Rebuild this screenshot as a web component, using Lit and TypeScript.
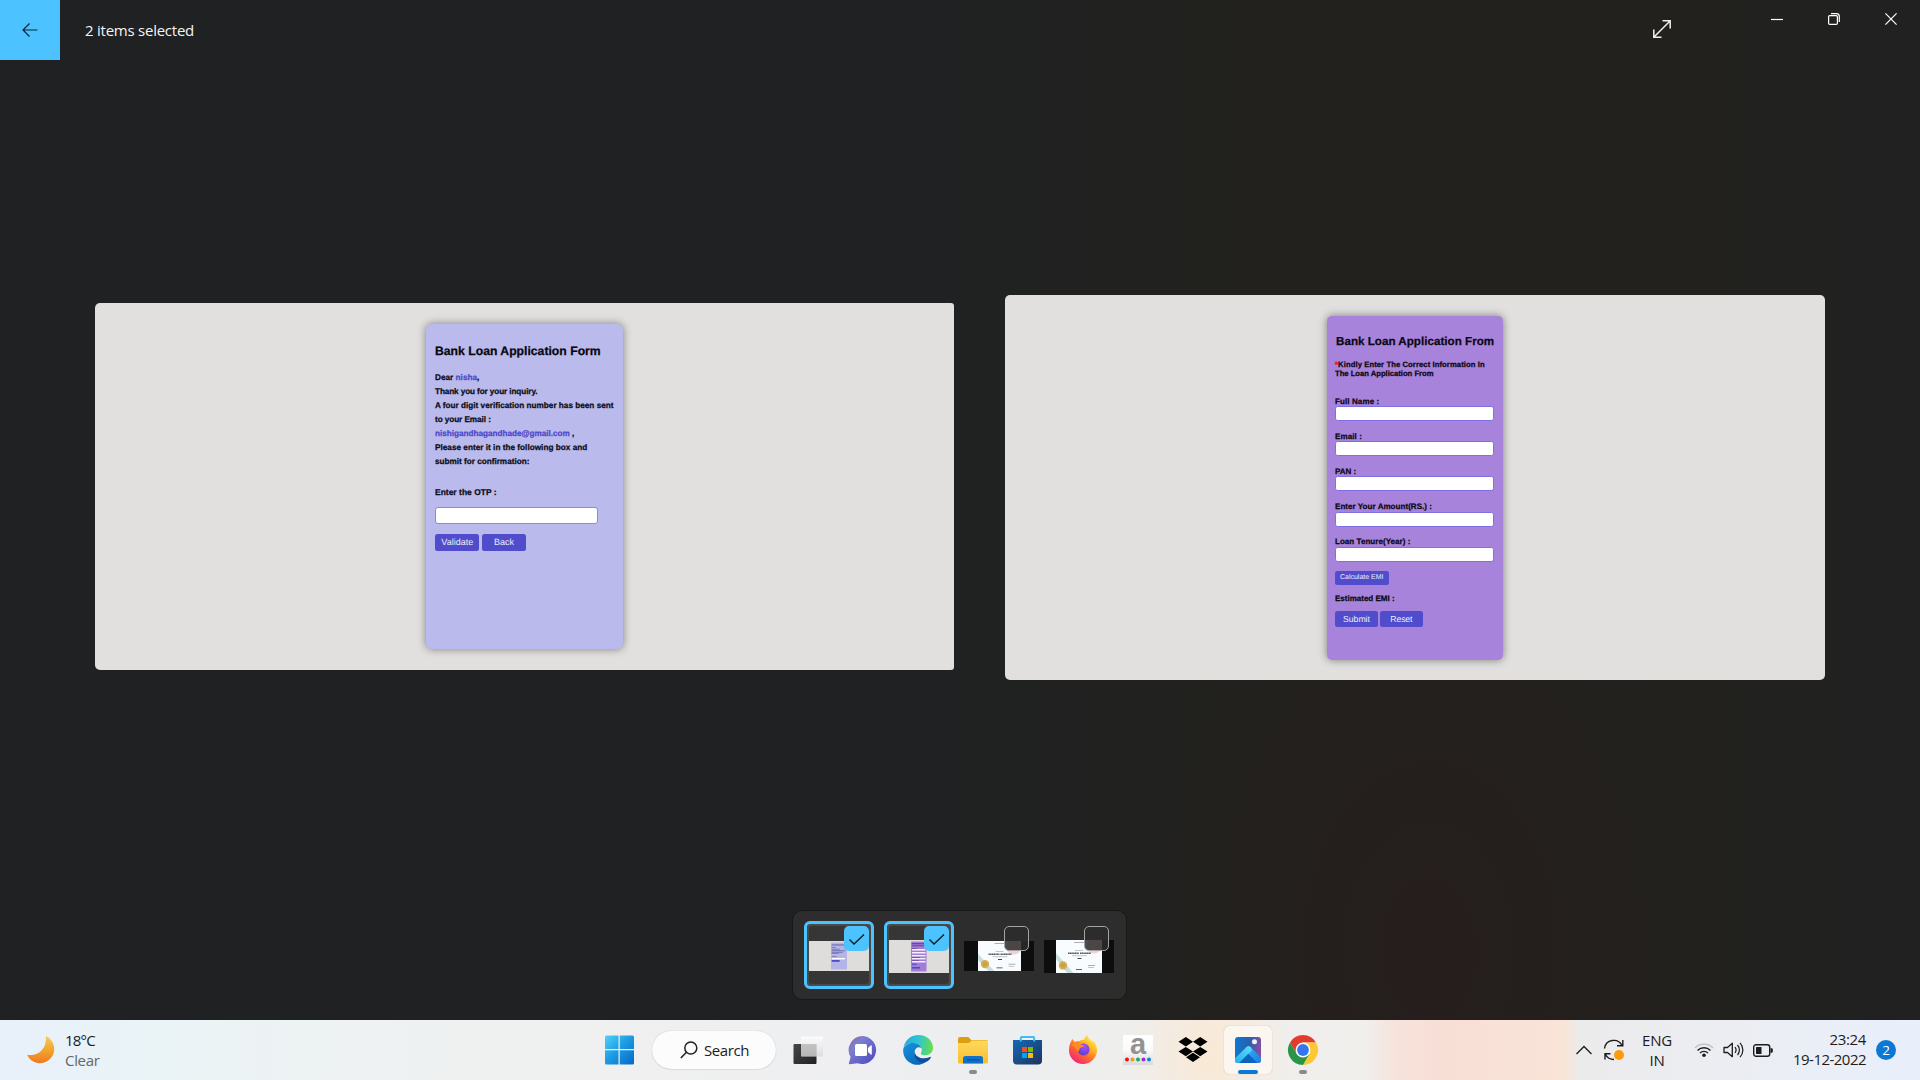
import { LitElement, html, css, svg } from "lit";
import { customElement } from "lit/decorators.js";

const FIELDS: [string, string][] = [
  ["Full Name :", "wide"],
  ["Email :", "wide"],
  ["PAN :", ""],
  ["Enter Your Amount(RS.) :", "mid"],
  ["Loan Tenure(Year) :", "mid"],
];

@customElement("otp-card")
export class OtpCard extends LitElement {
  static styles = css`
    :host { display: block; width: 196.3px; height: 325px; box-sizing: border-box; padding: 19.4px 0 0 8.7px;
      background: #babaec; border-radius: 6px; box-shadow: 0 0 8px rgba(0, 0, 0, 0.45);
      font: bold 8.2px/14px "Liberation Sans", Arial, sans-serif; color: #0c0c16; white-space: nowrap;
      text-rendering: geometricPrecision; }
    .title { font-size: 12.2px; line-height: 16px; letter-spacing: 0.01px; margin-bottom: 11.4px; color: #08080e;
      -webkit-text-stroke: 0.25px currentColor; }
    .line { -webkit-text-stroke: 0.25px currentColor; }
    .hl { color: #4c48cb; }
    .a { letter-spacing: 0.02px; }
    .b { letter-spacing: -0.11px; }
    .c { letter-spacing: 0; }
    .d { letter-spacing: -0.07px; }
    .e { letter-spacing: -0.02px; }
    .f { letter-spacing: 0.02px; }
    .g { letter-spacing: -0.01px; }
    .otp { font-size: 8.4px; letter-spacing: 0.06px; margin-top: 16.6px; -webkit-text-stroke: 0.25px currentColor; }
    .input { width: 163px; height: 16.5px; box-sizing: border-box; margin: 8px 0 9.7px; background: #fff;
      border: 0.8px solid #8b86e8; border-radius: 3px; }
    .row { display: flex; gap: 2.4px; }
    .btn { width: 44.5px; height: 17.2px; border-radius: 2.5px; background: #504ccc; color: #eeeefb;
      font-weight: normal; font-size: 9px; line-height: 17.6px; text-align: center; }
  `;
  render() {
    return html`
      <div class="title">Bank Loan Application Form</div>
      <div class="line a">Dear <span class="hl">nisha</span>,</div>
      <div class="line b">Thank you for your inquiry.</div>
      <div class="line c">A four digit verification number has been sent</div>
      <div class="line d">to your Email :</div>
      <div class="line e"><span class="hl">nishigandhagandhade@gmail.com</span> ,</div>
      <div class="line f">Please enter it in the following box and</div>
      <div class="line g">submit for confirmation:</div>
      <div class="otp">Enter the OTP :</div>
      <div class="input"></div>
      <div class="row"><div class="btn">Validate</div><div class="btn">Back</div></div>
    `;
  }
}

@customElement("loan-card")
export class LoanCard extends LitElement {
  static styles = css`
    :host { display: block; width: 175.7px; height: 344.4px; box-sizing: border-box; padding: 18px 0 0 8px;
      background: #a783dc; border-radius: 5px; box-shadow: 0 0 8px rgba(0, 0, 0, 0.45);
      font: bold 8px/10px "Liberation Sans", Arial, sans-serif; color: #0c0814; white-space: nowrap;
      text-rendering: geometricPrecision; }
    .title { font-size: 11.6px; line-height: 16px; letter-spacing: 0.03px; margin: 0 0 10px 1px; -webkit-text-stroke: 0.25px currentColor; }
    .note { font-size: 7.7px; line-height: 9.4px; -webkit-text-stroke: 0.25px currentColor; }
    .n1 { letter-spacing: 0.07px; }
    .n2 { letter-spacing: -0.03px; margin-bottom: 18.2px; }
    .star { color: #ff1030; -webkit-text-stroke: 0.5px #ff1030; }
    .label { -webkit-text-stroke: 0.25px currentColor; }
    .wide { letter-spacing: 0.109px; }
    .mid { letter-spacing: 0.05px; }
    .input { width: 159px; height: 15px; box-sizing: border-box; margin: -0.4px 0 10.5px; background: #fff;
      border: 0.8px solid #7f6fe6; border-radius: 2.5px; }
    .calc { width: 53.5px; height: 13.7px; margin: -1px 0 8.7px; border-radius: 2.5px; background: #504ccc;
      color: #eeecff; font-weight: normal; font-size: 7px; line-height: 13.7px; text-align: center; }
    .row { display: flex; gap: 2px; margin-top: 7.4px; }
    .btn { width: 42.9px; height: 16.2px; border-radius: 2.5px; background: #504ccc; color: #eeeefb;
      font-weight: normal; font-size: 8.7px; line-height: 16.2px; text-align: center; }
    .tight { letter-spacing: -0.15px; }
  `;
  render() {
    return html`
      <div class="title">Bank Loan Application From</div>
      <div class="note n1"><span class="star">*</span>Kindly Enter The Correct Information In</div>
      <div class="note n2">The Loan Application From</div>
      ${FIELDS.map(([label, cls]) => html`<div class="label ${cls}">${label}</div><div class="input"></div>`)}
      <div class="calc">Calculate EMI</div>
      <div class="label">Estimated EMI :</div>
      <div class="row"><div class="btn">Submit</div><div class="btn tight">Reset</div></div>
    `;
  }
}

@customElement("film-strip")
export class FilmStrip extends LitElement {
  static styles = css`
    :host { display: flex; gap: 10px; box-sizing: border-box; width: 335px; height: 90px; padding: 10px 11px;
      background: #2d2d2d; border: 1px solid #181818; border-radius: 10px; }
    .thumb { position: relative; width: 70px; height: 68px; flex: none; box-sizing: border-box; display: flex;
      align-items: center; justify-content: center; }
    .sel { border: 3px solid #4cc2ff; border-radius: 6px; background: #4a4a4a; }
    .inner { width: 60px; height: 58px; background: #363636; border-radius: 3px; display: flex; align-items: center; }
    .pic { display: block; position: relative; top: 1px; }
    .box { position: absolute; right: 5px; top: 5px; width: 25px; height: 25px; box-sizing: border-box;
      border: 1px solid #a4a4a4; border-radius: 5px; background: rgba(45, 45, 45, 0.85); }
    .sel .box { right: 2px; top: 2px; border: 0; background: #4cc2ff; }
    .box svg { display: block; }
  `;
  check() {
    return html`<svg width="25" height="25"><path d="M5.5 13.5L10 18L20 8.5" fill="none" stroke="#0a1a24" stroke-width="1.3"/></svg>`;
  }
  cert(h: number, x: number, w: number) {
    const m = x + w / 2;
    return html`<svg class="pic" width="70" height="${h}" viewBox="0 0 70 ${h}">
      <rect width="70" height="${h}" fill="#0d0d0d"/>
      <svg x="${x}" width="${w}" height="${h}">
        <rect width="${w}" height="${h}" fill="#f8fcfe"/>
        <path d="M0 13L${w * 0.38} ${h}H${w * 0.24}L0 19Z" fill="#c9dde2"/>
        <circle cx="${w * 0.83}" cy="6" r="7.5" fill="#f6ccd8"/>
        <circle cx="7" cy="${h * 0.77}" r="4.2" fill="#d6ad51"/>
        <circle cx="7" cy="${h * 0.77}" r="2.2" fill="#caa045"/>
      </svg>
      <g fill="#8a8f92">
        <rect x="${m - 5}" y="2" width="11" height=".7"/>
        <rect x="${m - 4}" y="10.4" width="8" height=".5"/>
        <rect x="${m - 7}" y="15.6" width="15" height=".5"/>
        <rect x="${m - 1.5}" y="18" width="4" height="1" fill="#444"/>
        <rect x="${m + 9}" y="${h * 0.76}" width="7" height=".7"/>
        <rect x="${m + 9}" y="${h * 0.83}" width="6" height=".5"/>
        <rect x="${m - 3}" y="${h * 0.88}" width="6" height=".9" fill="#555"/>
      </g>
      <path d="M${m - 11} 13.2h11M${m + 1} 13.2h11" stroke="#55595c" stroke-width="1.6" stroke-dasharray="1.4 .3"/>
    </svg>`;
  }
  render() {
    return html`
      <div class="thumb sel"><div class="inner">
        <svg class="pic" width="60" height="30">
          <rect width="60" height="30" fill="#dfdcdc"/><rect x="22" y="1.5" width="16" height="27" rx=".7" fill="#b5b4e6"/>
          <g fill="#7775b4"><rect x="22.7" y="3.3" width="13" height="1.3"/><rect x="22.7" y="6" width="4" height=".9"/>
          <rect x="22.7" y="7.8" width="8" height=".9"/><rect x="22.7" y="9.2" width="13.5" height="1"/><rect x="22.7" y="10.8" width="11" height="1"/>
          <rect x="22.7" y="12.2" width="7" height=".8"/><rect x="22.7" y="15.2" width="5" height=".8"/></g>
          <rect x="22.7" y="17" width="13.2" height="1.4" fill="#fff"/><rect x="22.7" y="19" width="8" height="1.8" fill="#4f4bc8"/>
        </svg></div><div class="box">${this.check()}</div></div>
      <div class="thumb sel"><div class="inner">
        <svg class="pic" width="60" height="33">
          <rect width="60" height="33" fill="#dfdcdc"/><rect x="22" y="1.5" width="15.5" height="30" rx=".7" fill="#a27cd6"/>
          <g fill="#6b479e"><rect x="23" y="3" width="13" height="1.3"/><rect x="23" y="5.2" width="12" height="1.1"/>
          <rect x="23" y="8" width="5" height=".7"/><rect x="23" y="17" width="8" height=".7"/><rect x="23" y="20" width="7" height=".7"/></g>
          <g fill="#f4effb"><rect x="23" y="9" width="13.5" height="1.6"/><rect x="23" y="12" width="13.5" height="1.5"/>
          <rect x="23" y="15" width="13.5" height="1.4"/><rect x="23" y="18" width="13.5" height="1.4"/><rect x="23" y="21" width="13.5" height="1.5"/></g>
          <g fill="#4f4bc8"><rect x="23" y="23.6" width="4.5" height="1.2"/><rect x="23" y="27" width="8" height="1.6"/></g>
        </svg></div><div class="box">${this.check()}</div></div>
      <div class="thumb">${this.cert(30, 14, 43)}<div class="box"></div></div>
      <div class="thumb">${this.cert(33, 12, 46)}<div class="box"></div></div>
    `;
  }
}

const ICONS = {
  start: svg`<defs><linearGradient id="w" x1="0" y1="0" x2="29" y2="29" gradientUnits="userSpaceOnUse"><stop offset="0" stop-color="#52d3fb"/><stop offset=".45" stop-color="#1e9fe4"/><stop offset="1" stop-color="#0669c8"/></linearGradient></defs>
    <path d="M1.500 .5H13.500V14H0V2Q0 .5 1.500 .5ZM14.700 .5H27.500Q29 .5 29 2V14H14.700ZM0 15.200H13.500V29.500H1.500Q0 29.500 0 28ZM14.700 15.200H29V28Q29 29.500 27.500 29.500H14.700Z" fill="url(#w)"/>`,
  tasks: svg`<defs><linearGradient id="t" x1="0" y1="0" x2="1" y2="1"><stop offset="0" stop-color="#474747"/><stop offset="1" stop-color="#212121"/></linearGradient><linearGradient id="tt" x1="0" y1="0" x2="0" y2="1"><stop offset="0" stop-color="#fff"/><stop offset="1" stop-color="#d8d8d8"/></linearGradient></defs>
    <rect x=".5" y="9" width="23" height="20" rx="1" fill="url(#t)"/><rect x="8" y="1.5" width="22" height="20" rx="1" fill="url(#tt)" opacity=".78"/><path d="M8 9H23.500V21.500H8Z" fill="#bbb" opacity=".5"/>`,
  chat: svg`<defs><linearGradient id="c" x1="0" y1="0" x2="1" y2="1"><stop offset="0" stop-color="#8f6795"/><stop offset=".3" stop-color="#7b7fd0"/><stop offset="1" stop-color="#4a45bd"/></linearGradient></defs>
    <path d="M15 1A14 14 0 1 1 9.5 28.2L1.6 29.3Q.6 29.3.9 28.2L2.6 22A14 14 0 0 1 15 1Z" fill="url(#c)"/><rect x="7" y="9" width="12" height="12" rx="1.6" fill="#fff"/><path d="M20 13L23 10.3Q23.8 10 23.8 11V19Q23.8 20 23 19.7L20 17Z" fill="#fff"/>`,
  edge: svg`<defs><linearGradient id="e1" x1="0" y1=".3" x2="1" y2=".4"><stop offset="0" stop-color="#2aa5e8"/><stop offset=".5" stop-color="#2fc6cf"/><stop offset="1" stop-color="#68de4b"/></linearGradient><linearGradient id="e2" x1="0" y1="0" x2=".6" y2="1"><stop offset="0" stop-color="#1596dc"/><stop offset="1" stop-color="#0b66bd"/></linearGradient></defs>
    <path d="M.6 12.5C2 4.5 8.500 0 15.500 0C24 0 30 6 30 12.8C30 17.500 26.500 20.300 22.300 20.300C18.500 20.300 17.500 18.800 18 17.800C20 15 18.500 9.500 12.500 8.200C7.500 7.300 2.500 9 .6 12.500Z" fill="url(#e1)"/>
    <path d="M.3 13.500C2 9.500 6.500 7.600 11 8C15.500 8.500 18 11 18.300 13C14 10.500 11.200 14.500 11.600 18.500C12 24 17.500 27.500 22.500 27C19 30 13 31 8 28.300C2.500 25.500-.5 20 .3 13.500Z" fill="url(#e2)"/>
    <path d="M11.600 16.500C10 23.500 17.500 30.800 24.500 26.300Q27 24.500 28 22.500Q28 21.600 27 21.900C20.500 25 12.500 23 11.600 16.500Z" fill="#0d4f9c"/>`,
  folder: svg`<defs><linearGradient id="f" x1="0" y1="0" x2="0" y2="1"><stop offset="0" stop-color="#ffda5e"/><stop offset="1" stop-color="#f9bd2c"/></linearGradient></defs>
    <path d="M0 4Q0 2 2 2H9.500Q11 2 12 3.500L13 5H28.500Q30 5 30 6.500V12H0Z" fill="#dd9f10"/><path d="M0 8H10.500Q12 8 13 6L13.500 5.500H30V27Q30 28.500 28.500 28.500H1.500Q0 28.500 0 27Z" fill="url(#f)"/><path d="M5 28.500V23.500Q5 21 7.500 21H22.500Q25 21 25 23.500V28.500Z" fill="#0e73c8"/><rect x="8.500" y="24.300" width="13" height="1.200" rx=".6" fill="#0a4e96"/>`,
  store: svg`<defs><linearGradient id="s" x1="0" y1="0" x2="1" y2="1"><stop offset="0" stop-color="#1569b4"/><stop offset="1" stop-color="#1f3360"/></linearGradient></defs>
    <path d="M0 5H29V25.500Q29 29.500 25 29.500H4Q0 29.500 0 25.500Z" fill="url(#s)"/><path d="M7.800 6.500V3Q7.800 2 8.800 2H20.200Q21.200 2 21.200 3V6.500" fill="none" stroke="#3cbdf5" stroke-width="2"/>
    <path d="M9 12H14V17H9Z" fill="#f25022"/><path d="M15 12H20V17H15Z" fill="#7fba00"/><path d="M9 18H14V23H9Z" fill="#00a4ef"/><path d="M15 18H20V23H15Z" fill="#ffb900"/>`,
  firefox: svg`<defs><linearGradient id="x" x1=".85" y1=".1" x2=".2" y2=".95"><stop offset="0" stop-color="#fff04a"/><stop offset=".3" stop-color="#ffb423"/><stop offset=".6" stop-color="#ff6a2c"/><stop offset="1" stop-color="#f0217c"/></linearGradient><radialGradient id="xp" cx=".6" cy=".3" r=".8"><stop offset="0" stop-color="#a050f5"/><stop offset="1" stop-color="#5a3bc4"/></radialGradient></defs>
    <path d="M4.500 4L6.500 7Q9 5.500 11.500 6Q13.500 4.500 16 4.700Q17 1.500 19 0Q20 3.500 24 6.500L25.500 6Q29 10 29 15.500C29 23 22.500 29 15 29C7.500 29 1 23 1 15.500Q1 8.500 4.500 4Z" fill="url(#x)"/>
    <circle cx="15.500" cy="14.500" r="6" fill="url(#xp)"/><path d="M3.500 10Q7 6 11 7.500L12.500 9.500L16 10.200Q15.500 12.300 12.500 12.800Q10.500 14.500 11 16.500Q8.500 16.500 7.500 13Q6 11 3.500 10Z" fill="#ff8a22"/>`,
  amazon: svg`<defs><linearGradient id="az" x1="0" y1="0" x2="0" y2="1"><stop offset="0" stop-color="#fff"/><stop offset=".5" stop-color="#fafafa"/><stop offset="1" stop-color="#dadada"/></linearGradient></defs>
    <rect width="30" height="30" fill="url(#az)"/><text x="15" y="19" text-anchor="middle" font-family="Liberation Sans" font-weight="bold" font-size="29" fill="#929292">a</text>
    <circle cx="4" cy="24.500" r="2" fill="#ee1111"/><circle cx="9.500" cy="24.500" r="2" fill="#f59a18"/><circle cx="15" cy="24.500" r="2" fill="#1aad5c"/><circle cx="20.500" cy="24.500" r="2" fill="#9233d6"/><circle cx="26" cy="24.500" r="2" fill="#0d80d8"/>`,
  dropbox: svg`<path d="M7.800 2L15 6.800L7.800 11.500L.5 6.800ZM22.200 2L29.500 6.800L22.200 11.500L15 6.800ZM7.800 12L15 16.500L7.800 21.200L.5 16.500ZM22.200 12L29.500 16.500L22.200 21.200L15 16.500ZM15 17.800L22 22.300L15 27L8 22.300Z" fill="#000"/>`,
  photos: svg`<defs><linearGradient id="p" x1="0" y1=".4" x2="1" y2=".5"><stop offset="0" stop-color="#0b7ad2"/><stop offset=".5" stop-color="#2a5fb0"/><stop offset="1" stop-color="#8450a2"/></linearGradient><linearGradient id="p2" x1="0" y1="1" x2="1" y2="0"><stop offset="0" stop-color="#23a9e6"/><stop offset="1" stop-color="#58dffc"/></linearGradient><linearGradient id="p3" x1="0" y1="0" x2="1" y2="1"><stop offset="0" stop-color="#55dcfb"/><stop offset=".35" stop-color="#2a9df0"/><stop offset="1" stop-color="#1479e0"/></linearGradient><clipPath id="pc"><rect x="2" y="2" width="26" height="26" rx="3"/></clipPath></defs>
    <g clip-path="url(#pc)"><rect x="2" y="2" width="26" height="26" fill="url(#p)"/><path d="M6.500 28L15.500 18.500L24.500 28Z" fill="#0d63c0"/><path d="M13.300 12.300Q15.500 10.300 17.700 12.300L30 24.600V30H26.500L13 16.500Z" fill="url(#p3)"/><path d="M0 25.300L13.300 12.300Q15.500 10.300 17.700 12.300Q19.200 14.300 17.500 16.500L4 30H0Z" fill="url(#p2)"/></g><circle cx="21.500" cy="6.800" r="2.500" fill="#f1f0f6"/>`,
  chrome: svg`<path d="M2 7.500A15 15 0 0 1 28 7.500H15L8.500 18.750Z" fill="#e33b2e"/><path d="M28 7.500A15 15 0 0 1 15 30L21.500 18.750L15 7.500Z" fill="#fcc934"/><path d="M15 30A15 15 0 0 1 2 7.500L8.500 18.750Q15 24 21.500 18.750Z" fill="#2a9546"/><circle cx="15" cy="15" r="7.400" fill="#fff"/><circle cx="15" cy="15" r="5.900" fill="#3377ee"/>`,
};

@customElement("task-bar")
export class TaskBar extends LitElement {
  static styles = css`
    :host { display: grid; grid-template-columns: 592px 738px 1fr; height: 60px; align-items: center; color: #1c1c1c;
      background: radial-gradient(ellipse 80px 120px at 1210px 35px, rgba(250, 232, 210, 0.9), rgba(250, 232, 210, 0)),
        linear-gradient(90deg, #e8f1fa 0, #eaf3f6 160px, #eef2f2 340px, #f0f0f0 600px, #edeef0 1000px, #efeeec 1150px,
        #f0efec 1365px, #f6e3dc 1395px, #f8dfd6 1440px, #f8e2d8 1530px, #fae4d6 1562px, #ebebec 1580px, #ecedf1 1700px, #e8effb 1920px);
      font: 15px/20px "Open Sans", "Noto Sans", sans-serif; white-space: nowrap; }
    .weather { display: flex; align-items: center; gap: 9.5px; padding-left: 27px; }
    .temp { letter-spacing: -0.8px; }
    .cond { color: #636769; letter-spacing: -0.32px; }
    .mid { display: flex; align-items: center; height: 60px; }
    .slot { width: 55px; height: 60px; flex: none; display: flex; align-items: center; justify-content: center; position: relative; }
    .search { width: 123.500px; height: 38.500px; margin: 0 4.500px 0 5px; box-sizing: border-box; border-radius: 20px; background: #fcfcfc;
      box-shadow: 0 0 1px rgba(0, 0, 0, 0.25), 0 1px 1px rgba(0,0,0,.06); display: flex; align-items: center; gap: 6px; padding-left: 28px; letter-spacing: -0.42px; }
    .tile { width: 48px; height: 48px; border-radius: 5px; background: #fbf6f0; box-shadow: 0 0 1px rgba(0, 0, 0, 0.3); display: flex; align-items: center; justify-content: center; }
    .dot { position: absolute; bottom: 6px; left: 23.500px; width: 8px; height: 4px; border-radius: 2px; background: #8a8a8a; }
    .active { left: 17.500px; width: 20px; background: #0b78d4; }
    .tray { display: flex; align-items: center; height: 60px; padding-left: 245px; }
    svg { display: block; overflow: visible; flex: none; }
    .sync { margin-left: 10px; }
    .lang { width: 60px; text-align: center; letter-spacing: -0.18px; margin: 0 7px 0 2px; }
    .status { display: flex; align-items: center; gap: 9px; }
    .clock { margin: -2px 0 0 19px; width: 74px; text-align: right; }
    .time { letter-spacing: -0.35px; }
    .date { letter-spacing: -0.53px; }
    .badge { margin-left: 10px; width: 20px; height: 20px; border-radius: 50%; background: #0b78d4; color: #fff; text-align: center; font-size: 13.500px; line-height: 20px; }
  `;
  slotIcon(icon: unknown, dot = false) {
    return html`<div class="slot"><svg width="30" height="30" viewBox="0 0 30 30">${icon}</svg>${dot ? html`<div class="dot"></div>` : ""}</div>`;
  }
  render() {
    return html`
      <div class="weather">
        <svg width="28.500" height="28.500" viewBox="0 0 28 28"><defs><linearGradient id="m" x1="0" y1="0" x2="0" y2="1"><stop offset="0" stop-color="#f7cc5e"/><stop offset=".5" stop-color="#f2a62c"/><stop offset="1" stop-color="#ee7a22"/></linearGradient></defs>
        <path d="M18.500 0A14 14 0 1 1 0 18.500Q2 18.800 4 18.700A15 15 0 0 0 18.500 4Q18.700 2 18.500 0Z" fill="url(#m)"/></svg>
        <div><div class="temp">18°C</div><div class="cond">Clear</div></div>
      </div>
      <div class="mid">
        ${this.slotIcon(ICONS.start)}
        <div class="search"><svg width="18" height="18" viewBox="0 0 18 18"><circle cx="10.800" cy="7" r="6" fill="none" stroke="#222" stroke-width="1.500"/><path d="M6.500 11.300L.8 17" stroke="#222" stroke-width="1.600"/></svg>Search</div>
        ${this.slotIcon(ICONS.tasks)}${this.slotIcon(ICONS.chat)}${this.slotIcon(ICONS.edge)}${this.slotIcon(ICONS.folder, true)}
        ${this.slotIcon(ICONS.store)}${this.slotIcon(ICONS.firefox)}${this.slotIcon(ICONS.amazon)}${this.slotIcon(ICONS.dropbox)}
        <div class="slot"><div class="tile"><svg width="30" height="30" viewBox="0 0 30 30">${ICONS.photos}</svg></div><div class="dot active"></div></div>
        ${this.slotIcon(ICONS.chrome, true)}
      </div>
      <div class="tray">
        <svg width="18" height="10" viewBox="0 0 18 10"><path d="M1.500 9L9 1.500L16.500 9" fill="none" stroke="#1c1c1c" stroke-width="1.300"/></svg>
        <svg class="sync" width="22" height="22" viewBox="0 0 22 22"><path d="M1.500 9.500A9.300 9.300 0 0 1 19 6.500M19.800 1V6.800H14M2 20.500V14.800H7.500M2.500 15.500Q5 20.500 11 20.500" fill="none" stroke="#1c1c1c" stroke-width="1.400"/><circle cx="16" cy="16" r="5" fill="#ff9a0c"/></svg>
        <div class="lang"><div>ENG</div><div>IN</div></div>
        <div class="status">
          <svg width="20" height="16" viewBox="0 0 20 16"><path d="M1 6A12.500 12.500 0 0 1 19 6" fill="none" stroke="#bdbdbd" stroke-width="1.300"/><path d="M3.500 8.500A9.200 9.200 0 0 1 16.500 8.500M6 11A5.700 5.700 0 0 1 14 11" fill="none" stroke="#1c1c1c" stroke-width="1.400"/><circle cx="10" cy="13.300" r="1.800" fill="#1c1c1c"/></svg>
          <svg width="21" height="16" viewBox="0 0 21 16"><path d="M1 5.500H4.500L9.300 1.300V14.700L4.500 10.500H1Z" fill="none" stroke="#1c1c1c" stroke-width="1.300" stroke-linejoin="round"/><path d="M12 5.200A4.500 4.500 0 0 1 12 10.800M14.500 3A7.500 7.500 0 0 1 14.500 13M17 .8A10.500 10.500 0 0 1 17 15.200" fill="none" stroke="#1c1c1c" stroke-width="1.200"/></svg>
          <svg width="20" height="13" viewBox="0 0 20 13"><rect x=".7" y=".7" width="16" height="11.600" rx="2.300" fill="none" stroke="#1c1c1c" stroke-width="1.400"/><rect x="3" y="3" width="5.500" height="7" rx=".5" fill="#1c1c1c"/><path d="M17.500 4.300H18.500Q19.800 4.300 19.800 5.500V7.500Q19.800 8.700 18.500 8.700H17.500Z" fill="#1c1c1c"/></svg>
        </div>
        <div class="clock"><div class="time">23:24</div><div class="date">19-12-2022</div></div>
        <div class="badge">2</div>
      </div>
    `;
  }
}

@customElement("app-root")
export class AppRoot extends LitElement {
  static styles = css`
    :host { display: grid; grid-template-rows: 60px 1fr 60px; width: 1920px; height: 1080px; overflow: hidden;
      background: radial-gradient(ellipse 280px 420px at 1430px 950px, rgba(38, 30, 28, 0.9), rgba(36, 31, 28, 0)),
        linear-gradient(90deg, #202122 0, #202122 950px, #22211e 1250px, #22211e 1700px, #212121 1850px);
      font: 15px/20px "Open Sans", "Noto Sans", sans-serif; color: #f4f4f4; }
    header { display: flex; height: 60px; }
    .back { width: 60px; height: 60px; background: #4cc2ff; display: flex; align-items: center; justify-content: center; }
    .status { flex: 1; padding-left: 25px; line-height: 60px; letter-spacing: -0.24px; }
    svg { display: block; }
    .expand { margin: 19px 99px 0 0; width: 20px; }
    .win { display: flex; gap: 45px; margin: 13px 23px 0 0; height: 12px; }
    main { display: flex; flex-direction: column; align-items: center; justify-content: space-between; padding-bottom: 20px; }
    .stage { display: flex; align-items: flex-start; gap: 51px; width: 1730px; padding-top: 235px; }
    .panel { background: #e1e0de; border-radius: 5px; box-sizing: border-box; }
    .left { width: 859px; height: 367px; margin-top: 8px; padding: 21px 0 0 331.300px; border-radius: 5px 3px 3px 5px; }
    .right { width: 820px; height: 385px; padding: 20.600px 0 0 322px; }
    film-strip { margin-right: 1px; }
  `;
  render() {
    return html`
      <header>
        <div class="back"><svg width="16" height="14" viewBox="0 0 16 14"><path d="M15.500 7H1M7.500.5L1 7L7.500 13.500" fill="none" stroke="#0b2533" stroke-width="1.200"/></svg></div>
        <div class="status">2 items selected</div>
        <div class="expand"><svg width="20" height="20" viewBox="0 0 20 20"><path d="M2 18L18 2M10.500 1.800H18.200V9.500M1.800 10.500V18.200H9.500" fill="none" stroke="#f0f0f0" stroke-width="1.500"/></svg></div>
        <div class="win">
          <svg width="12" height="12"><path d="M0 6.500H12" stroke="#fff" stroke-width="1.200"/></svg>
          <svg width="12" height="12"><rect x=".6" y="2.600" width="8.800" height="8.800" rx="1.200" fill="none" stroke="#fff" stroke-width="1.200"/><path d="M3 .7H8.500Q11.300.7 11.300 3.500V9" fill="none" stroke="#fff" stroke-width="1.200"/></svg>
          <svg width="12" height="12"><path d="M.4.4L11.600 11.600M11.600.4L.4 11.600" stroke="#fff" stroke-width="1.200"/></svg>
        </div>
      </header>
      <main>
        <div class="stage">
          <div class="panel left"><otp-card></otp-card></div>
          <div class="panel right"><loan-card></loan-card></div>
        </div>
        <film-strip></film-strip>
      </main>
      <task-bar></task-bar>
    `;
  }
}
